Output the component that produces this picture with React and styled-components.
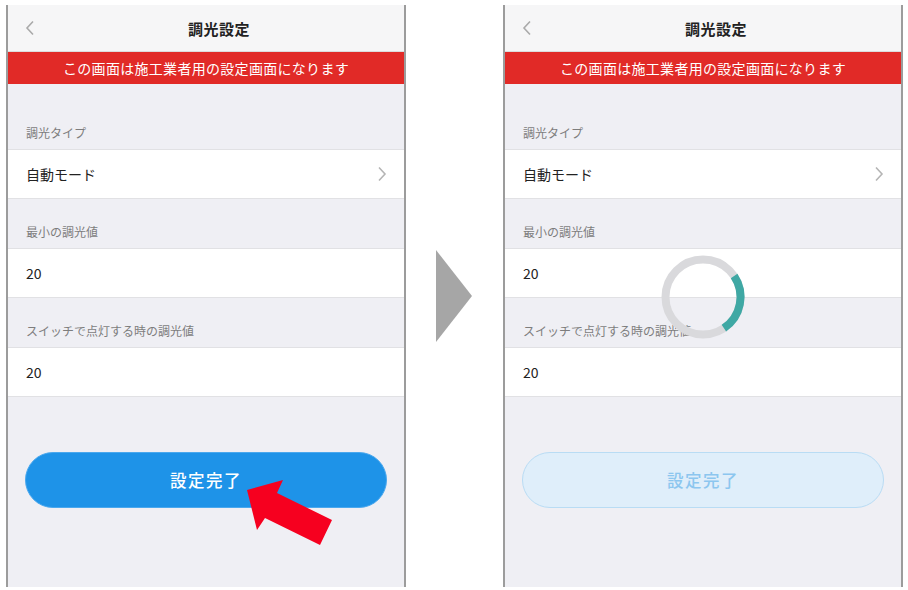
import React from "react";
import styled, { createGlobalStyle } from "styled-components";

const GlobalStyle = createGlobalStyle`
  body {
    margin: 0;
    background: #ffffff;
    font-family: "Noto Sans CJK JP", "Noto Sans", sans-serif;
  }
`;

const Page = styled.div`
  display: flex;
  align-items: flex-start;
  padding: 5px 0 0 6px;
  width: 908px;
  height: 590px;
  box-sizing: border-box;
`;

const Phone = styled.div`
  position: relative;
  width: 400px;
  height: 582px;
  box-sizing: border-box;
  border-left: 2px solid #9c9c9c;
  border-right: 2px solid #9c9c9c;
  background: #efeff4;
  display: flex;
  flex-direction: column;
`;

const Header = styled.div`
  height: 47px;
  flex-shrink: 0;
  background: #f6f6f7;
  border-bottom: 1px solid #dcdcdc;
  box-sizing: border-box;
  display: flex;
  align-items: center;
  justify-content: center;
  padding-left: 26px;
  position: relative;
`;

const Back = styled.svg`
  position: absolute;
  left: 17px;
  top: 15px;
`;

const Title = styled.div`
  font-size: 15px;
  font-weight: 700;
  color: #222;
  letter-spacing: 0.5px;
`;

const Banner = styled.div`
  height: 32px;
  flex-shrink: 0;
  background: #e12a27;
  color: #fff;
  font-size: 14px;
  display: flex;
  align-items: center;
  justify-content: center;
  letter-spacing: 0.3px;
`;

const Label = styled.div`
  padding: ${(p) => (p.$first ? "40px" : "24px")} 18px 8px;
  font-size: 12px;
  color: #7d7d7d;
  line-height: 17px;
`;

const Row = styled.div`
  height: 50px;
  box-sizing: border-box;
  background: #fff;
  border-top: 1px solid #e1e1e4;
  border-bottom: 1px solid #e1e1e4;
  display: flex;
  align-items: center;
  justify-content: space-between;
  padding: 0 17px 0 18px;
  font-size: 14px;
  color: #222;
`;

const ButtonWrap = styled.div`
  padding: 55px 17px 0;
`;

const Submit = styled.div`
  height: 56px;
  box-sizing: border-box;
  border-radius: 28px;
  display: flex;
  align-items: center;
  justify-content: center;
  font-size: 16.5px;
  font-weight: 500;
  letter-spacing: 1.5px;
  background: ${(p) => (p.$disabled ? "#dfeefa" : "#1e93e8")};
  border: 1px solid ${(p) => (p.$disabled ? "#b9dcf4" : "#4aa8ee")};
  color: ${(p) => (p.$disabled ? "#8cc6ef" : "#ffffff")};
`;

const Divider = styled.div`
  width: 97px;
  height: 582px;
  display: flex;
  align-items: center;
  justify-content: center;
`;

const Overlay = styled.svg`
  position: absolute;
  pointer-events: none;
`;

const Chevron = () => (
  <svg width="10" height="16" viewBox="0 0 10 16">
    <path d="M2 1.5 L8 8 L2 14.5" fill="none" stroke="#b5b5b5" strokeWidth="1.6" />
  </svg>
);

function Screen({ disabled, children }) {
  return (
    <Phone>
      <Header>
        <Back width="10" height="16" viewBox="0 0 10 16">
          <path d="M8 1.5 L2 8 L8 14.5" fill="none" stroke="#aaaaaa" strokeWidth="1.6" />
        </Back>
        <Title>調光設定</Title>
      </Header>
      <Banner>この画面は施工業者用の設定画面になります</Banner>
      <Label $first>調光タイプ</Label>
      <Row>
        自動モード
        <Chevron />
      </Row>
      <Label>最小の調光値</Label>
      <Row>20</Row>
      <Label>スイッチで点灯する時の調光値</Label>
      <Row>20</Row>
      <ButtonWrap>
        <Submit $disabled={disabled}>設定完了</Submit>
      </ButtonWrap>
      {children}
    </Phone>
  );
}

export default function App() {
  return (
    <>
      <GlobalStyle />
      <Page>
        <Screen>
          <Overlay
            width="100"
            height="80"
            viewBox="0 0 100 80"
            style={{ left: 224, top: 470 }}
          >
            <polygon
              points="15,15 51,5 45,18 100,45 88,70 33,43 25,55"
              fill="#f6001f"
            />
          </Overlay>
        </Screen>
        <Divider>
          <svg width="37" height="92" viewBox="0 0 37 92">
            <polygon points="0,0 36,46 0,92" fill="#a6a6a6" />
          </svg>
        </Divider>
        <Screen disabled>
          <Overlay
            width="90"
            height="90"
            viewBox="0 0 90 90"
            style={{ left: 153, top: 247 }}
          >
            <circle cx="45" cy="45" r="37.5" fill="none" stroke="#d9d9dc" strokeWidth="8" />
            <path
              d="M 76.1 24.0 A 37.5 37.5 0 0 1 65.9 76.1"
              fill="none"
              stroke="#3fa8a4"
              strokeWidth="8"
            />
          </Overlay>
        </Screen>
      </Page>
    </>
  );
}
